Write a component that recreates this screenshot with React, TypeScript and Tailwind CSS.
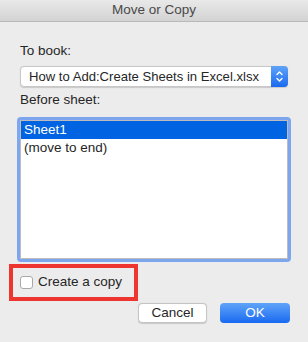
export default function App() {
  return (
    <div
      className="w-[308px] h-[342px] bg-[#ececec] text-[13.5px] text-[#262626] overflow-hidden"
      style={{ fontFamily: '"Liberation Sans", Arial, sans-serif' }}
    >
      {/* title bar */}
      <div className="h-[22px] flex items-center justify-center bg-gradient-to-b from-[#e9e9e9] to-[#d3d3d3] border-b border-[#b9b9b9] text-[#4a4a4a]">
        Move or Copy
      </div>

      <div className="px-5">
        <div className="mt-[21px] leading-4">To book:</div>

        {/* select */}
        <div className="mt-[7px] h-[21px] flex rounded-[4px] bg-white border border-[#c8c8c8] shadow-[0_0.5px_1px_rgba(0,0,0,0.15)]">
          <div className="flex-1 pl-2 flex items-center whitespace-nowrap overflow-hidden text-[13.1px]">
            How to Add:Create Sheets in Excel.xlsx
          </div>
          <div className="w-[17px] -my-px -mr-px rounded-r-[4px] bg-gradient-to-b from-[#5fa3f8] to-[#1769f0] flex items-center justify-center">
            <svg width="9" height="13" viewBox="0 0 9 13" fill="none" stroke="white" strokeWidth="1.4" strokeLinecap="round" strokeLinejoin="round">
              <path d="M2 4.5 L4.5 2 L7 4.5" />
              <path d="M2 8.5 L4.5 11 L7 8.5" />
            </svg>
          </div>
        </div>

        <div className="mt-[5px] leading-4">Before sheet:</div>

        {/* listbox */}
        <div className="mt-[9px] -mx-[3px] h-[145px] rounded-[4px] border-[3px] border-[#7ea6ee] bg-white">
          <div className="h-full border border-[#bcbcbc]">
            <div className="h-[18px] bg-[#0063e1] text-white flex items-center pl-[3px]">Sheet1</div>
            <div className="h-[19px] flex items-center pl-[3px]">(move to end)</div>
          </div>
        </div>
      </div>

      {/* checkbox highlighted */}
      <div className="ml-[9px] mt-[2px] w-[129px] h-[37px] border-4 border-[#ee3530] flex items-center pl-[7px] gap-[5px]">
        <div className="w-[13px] h-[13px] rounded-[3px] bg-white border border-[#a9a9a9]" />
        <span>Create a copy</span>
      </div>

      {/* buttons */}
      <div className="mt-[2px] pr-[18px] flex justify-end gap-[13px]">
        <button className="w-[69px] h-[20px] rounded-[4px] bg-white border border-[#c4c4c4] shadow-[0_0.5px_1px_rgba(0,0,0,0.15)] leading-none">
          Cancel
        </button>
        <button className="w-[70px] h-[20px] rounded-[4px] bg-gradient-to-b from-[#5fa3f8] to-[#1769f0] text-white leading-none">
          OK
        </button>
      </div>
    </div>
  )
}
